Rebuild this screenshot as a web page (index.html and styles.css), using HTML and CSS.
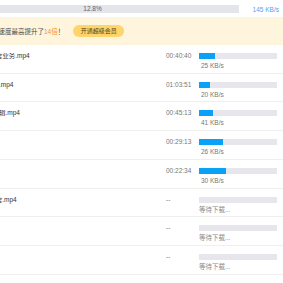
FILE: index.html
```html
<!DOCTYPE html>
<html lang="zh-CN">
<head>
<meta charset="utf-8">
<title>下载列表</title>
<link rel="stylesheet" href="styles.css">
</head>
<body>
<div class="viewport">
  <div class="content">
    <div class="total">
      <div class="total-bar"><span class="total-pct">12.8%</span></div>
      <div class="total-speed">145 KB/s</div>
    </div>
    <div class="banner">
      <span class="banner-text">开通会员后下载速度最高提升了<em>14倍</em>！</span>
      <button class="vip-btn">开通超级会员</button>
    </div>
    <div class="list">
      <div class="row">
        <div class="name">第1讲-新媒体运营业务.mp4</div>
        <div class="time">00:40:40</div>
        <div class="prog"><div class="bar"><div class="fill" style="width:20%"></div></div><div class="speed">25 KB/s</div></div>
      </div>
      <div class="row">
        <div class="name">02 内容选题策划.mp4</div>
        <div class="time">01:03:51</div>
        <div class="prog"><div class="bar"><div class="fill" style="width:14%"></div></div><div class="speed">20 KB/s</div></div>
      </div>
      <div class="row">
        <div class="name">03 短视频拍摄剪辑.mp4</div>
        <div class="time">00:45:13</div>
        <div class="prog"><div class="bar"><div class="fill" style="width:18%"></div></div><div class="speed">41 KB/s</div></div>
      </div>
      <div class="row">
        <div class="name">04 用户增.mp4</div>
        <div class="time">00:29:13</div>
        <div class="prog"><div class="bar"><div class="fill" style="width:31%"></div></div><div class="speed">26 KB/s</div></div>
      </div>
      <div class="row">
        <div class="name">05 直播课.mp4</div>
        <div class="time">00:22:34</div>
        <div class="prog"><div class="bar"><div class="fill" style="width:35%"></div></div><div class="speed">30 KB/s</div></div>
      </div>
      <div class="row">
        <div class="name">第6讲-数据化运营.mp4</div>
        <div class="time">--</div>
        <div class="prog"><div class="bar"></div><div class="speed wait">等待下载...</div></div>
      </div>
      <div class="row">
        <div class="name">07 社群课.mp4</div>
        <div class="time">--</div>
        <div class="prog"><div class="bar"></div><div class="speed wait">等待下载...</div></div>
      </div>
      <div class="row">
        <div class="name">08 总结课.mp4</div>
        <div class="time">--</div>
        <div class="prog"><div class="bar"></div><div class="speed wait">等待下载...</div></div>
      </div>
      <div class="row">
        <div class="name">09 答疑.mp4</div>
        <div class="time">--</div>
        <div class="prog"><div class="bar"></div><div class="speed wait">等待下载...</div></div>
      </div>
    </div>
  </div>
</div>
</body>
</html>
```

FILE: styles.css
```css
* { box-sizing: border-box; }
html, body {
  margin: 0;
  padding: 0;
  background: #ffffff;
}
body {
  font-family: "Liberation Sans", "Noto Sans CJK SC", sans-serif;
  color: #333;
}
.viewport {
  width: 283px;
  height: 283px;
  overflow: hidden;
}
.content {
  width: 337px;
  margin-left: -54px;
}
.total {
  display: flex;
  align-items: center;
  padding: 5px 4px 4px 0;
  height: 17px;
}
.total-bar {
  width: 293px;
  height: 8px;
  background: #e4e5ea;
  display: flex;
  align-items: center;
  justify-content: center;
}
.total-pct {
  font-size: 6.5px;
  line-height: 8px;
  color: #5c5c66;
}
.total-speed {
  margin-left: auto;
  font-size: 6.5px;
  color: #4da6f0;
  white-space: nowrap;
}
.banner {
  height: 28px;
  background: #fff4dc;
  display: flex;
  align-items: center;
  padding-left: 7px;
}
.banner-text {
  font-size: 6.5px;
  color: #4a4a4a;
  white-space: nowrap;
}
.banner-text em {
  font-style: normal;
  color: #f09a1a;
}
.vip-btn {
  margin-left: 9px;
  width: 51px;
  height: 12px;
  border: 0;
  border-radius: 6px;
  background: #ffd46b;
  color: #5a4414;
  font-family: inherit;
  font-size: 6px;
  line-height: 12px;
  padding: 0;
}
.row {
  display: grid;
  grid-template-columns: 220px 33px 78px;
  height: 28.72px;
  padding: 8px 6px 0 0;
  border-bottom: 1px solid #efefef;
}
.name {
  padding-left: 5px;
  font-size: 6.5px;
  line-height: 6px;
  color: #333;
  white-space: nowrap;
  overflow: hidden;
}
.time {
  font-size: 6.5px;
  line-height: 6px;
  color: #777;
}
.prog {
  display: flex;
  flex-direction: column;
}
.bar {
  height: 6px;
  background: #e6e6ec;
}
.fill {
  height: 100%;
  background: #0aa2f7;
}
.speed {
  margin-top: 3px;
  padding-left: 2px;
  font-size: 6.5px;
  line-height: 8px;
  color: #777;
}
.speed.wait {
  padding-left: 0;
  color: #888;
}
```
